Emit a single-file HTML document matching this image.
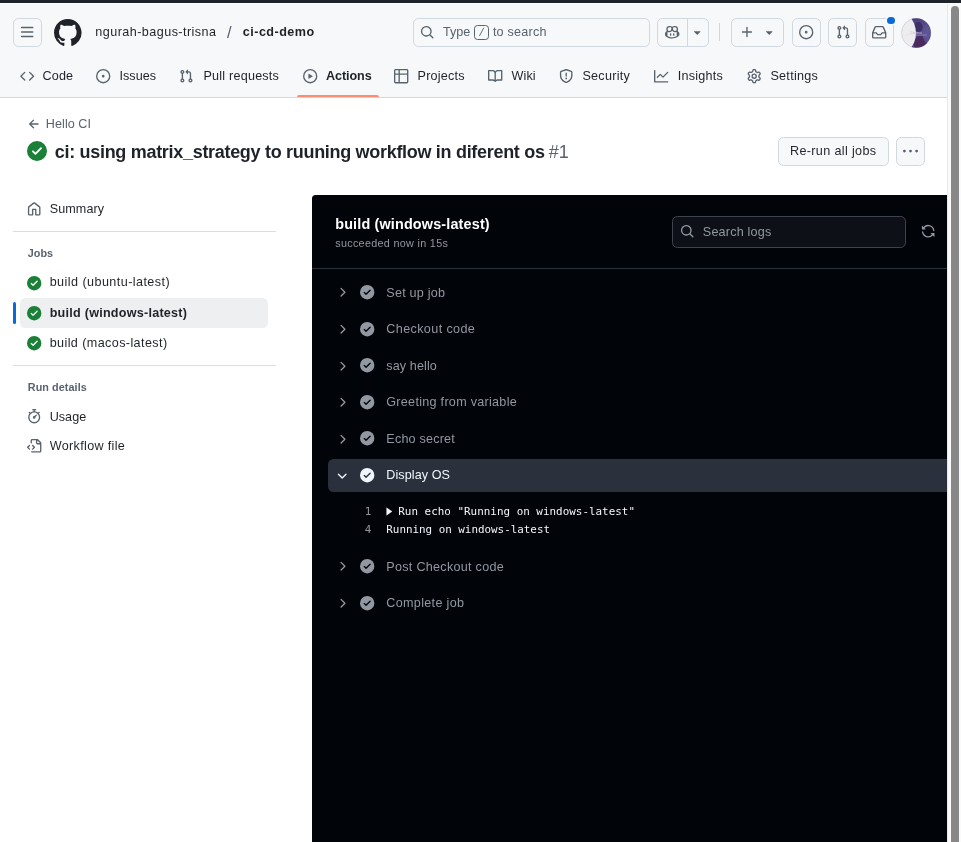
<!DOCTYPE html>
<html lang="en">
<head>
<meta charset="utf-8">
<title>ci: using matrix_strategy to ruuning workflow in diferent os · ngurah-bagus-trisna/ci-cd-demo</title>
<style>
html,body{margin:0;padding:0;}
body{width:961px;height:842px;position:relative;overflow:hidden;background:#fff;font-family:"Liberation Sans",sans-serif;}
body>div,body>svg,.t{position:absolute;box-sizing:border-box;}
main{position:absolute;left:0;top:0;width:961px;height:842px;will-change:transform;}
.t{white-space:pre;margin:0;font-weight:400;}
svg{display:block;overflow:visible;}
</style>
</head>
<body>
<div style="left:0px;top:0px;width:947px;height:98px;background:#f6f8fa;border-bottom:1px solid #d1d9e0;"></div>
<div style="left:0px;top:0px;width:961px;height:3px;background:#1e222a;"></div>
<div style="left:0px;top:3px;width:961px;height:1px;background:#ffffff;"></div>
<div style="left:947px;top:4px;width:14px;height:838px;background:#fafafa;border-left:1px solid #e8e8e8;"></div>
<div style="left:951px;top:6px;width:8px;height:836px;background:#888888;border-radius:4px 4px 0 0;"></div>
<div style="left:13px;top:18px;width:28.8px;height:28.8px;border:1px solid #d1d9e0;border-radius:5.4px;"></div>
<svg style="left:20.20px;top:25.20px;" width="14.4" height="14.4" viewBox="0 0 16 16" fill="#59636e"><path d="M1 2.75A.75.75 0 0 1 1.75 2h12.5a.75.75 0 0 1 0 1.5H1.75A.75.75 0 0 1 1 2.75Zm0 5A.75.75 0 0 1 1.75 7h12.5a.75.75 0 0 1 0 1.5H1.75A.75.75 0 0 1 1 7.75ZM1.75 12h12.5a.75.75 0 0 1 0 1.5H1.75a.75.75 0 0 1 0-1.5Z"/></svg>
<svg style="left:54.00px;top:18.70px;" width="27.6" height="27.6" viewBox="0 0 16 16" fill="#1f2328"><path d="M8 0c4.42 0 8 3.58 8 8a8.013 8.013 0 0 1-5.45 7.59c-.4.08-.55-.17-.55-.38 0-.27.01-1.13.01-2.2 0-.75-.25-1.23-.54-1.48 1.78-.2 3.65-.88 3.65-3.95 0-.88-.31-1.59-.82-2.15.08-.2.36-1.02-.08-2.12 0 0-.67-.22-2.2.82-.64-.18-1.32-.27-2-.27-.68 0-1.36.09-2 .27-1.53-1.03-2.2-.82-2.2-.82-.44 1.1-.16 1.92-.08 2.12-.51.56-.82 1.28-.82 2.15 0 3.06 1.86 3.75 3.64 3.95-.23.2-.44.55-.51 1.07-.46.21-1.61.55-2.33-.66-.15-.24-.6-.83-1.23-.82-.67.01-.27.38.01.53.34.19.73.9.82 1.13.16.45.68 1.31 2.69.94 0 .67.01 1.3.01 1.49 0 .21-.15.45-.55.38A7.995 7.995 0 0 1 0 8c0-4.42 3.58-8 8-8Z"/></svg>
<div style="left:413px;top:18px;width:237px;height:28.8px;border:1px solid #d1d9e0;border-radius:5.4px;"></div>
<svg style="left:420.30px;top:25.10px;" width="14.4" height="14.4" viewBox="0 0 16 16" fill="#59636e"><path d="M10.68 11.74a6 6 0 0 1-7.922-8.982 6 6 0 0 1 8.982 7.922l3.04 3.04a.749.749 0 0 1-.326 1.275.749.749 0 0 1-.734-.215ZM11.5 7a4.499 4.499 0 1 0-8.997 0A4.499 4.499 0 0 0 11.5 7Z"/></svg>
<div style="left:474px;top:25.4px;width:15px;height:14.4px;border:1px solid #59636e;border-radius:3.5px;"></div>
<div style="left:657px;top:18px;width:52px;height:28.8px;border:1px solid #d1d9e0;border-radius:5.4px;"></div>
<div style="left:687px;top:18px;width:1px;height:28.8px;background:#d1d9e0;"></div>
<svg style="left:665.00px;top:25.30px;" width="14.4" height="14.4" viewBox="0 0 16 16" fill="#59636e"><path d="M7.998 15.035c-4.562 0-7.873-2.914-7.998-3.749V9.338c.085-.628.677-1.686 1.588-2.065.013-.07.024-.143.036-.218.029-.183.06-.384.126-.612-.201-.508-.254-1.084-.254-1.656 0-.87.128-1.769.693-2.484.579-.733 1.494-1.124 2.724-1.261 1.206-.134 2.262.034 2.944.765.05.053.096.108.139.165.044-.057.094-.112.143-.165.682-.731 1.738-.899 2.944-.765 1.23.137 2.145.528 2.724 1.261.566.715.693 1.614.693 2.484 0 .572-.053 1.148-.254 1.656.066.228.098.429.126.612.012.076.024.148.037.218.924.385 1.522 1.471 1.591 2.095v1.872c0 .766-3.351 3.795-8.002 3.795Zm0-1.485c2.28 0 4.584-1.11 5.002-1.433V7.862l-.023-.116c-.49.21-1.075.291-1.727.291-1.146 0-2.059-.327-2.71-.991A3.222 3.222 0 0 1 8 6.303a3.24 3.24 0 0 1-.544.743c-.65.664-1.563.991-2.71.991-.652 0-1.236-.081-1.727-.291l-.23.116v4.255c.419.323 2.722 1.433 5.002 1.433ZM6.762 2.83c-.193-.206-.637-.413-1.682-.297-1.019.113-1.479.404-1.713.7-.247.312-.369.789-.369 1.554 0 .793.129 1.171.308 1.371.162.181.519.379 1.442.379.853 0 1.339-.235 1.638-.54.315-.322.527-.827.617-1.553.117-.935-.037-1.395-.241-1.614Zm4.155-.297c-1.044-.116-1.488.091-1.681.297-.204.219-.359.679-.242 1.614.091.726.303 1.231.618 1.553.299.305.784.54 1.638.54.922 0 1.28-.198 1.442-.379.179-.2.308-.578.308-1.371 0-.765-.123-1.242-.37-1.554-.233-.296-.693-.587-1.713-.7ZM6.25 9.037a.75.75 0 0 1 .75.75v1.501a.75.75 0 0 1-1.5 0V9.787a.75.75 0 0 1 .75-.75Zm4.25.75v1.501a.75.75 0 0 1-1.5 0V9.787a.75.75 0 0 1 1.5 0Z"/></svg>
<svg style="left:690.10px;top:25.40px;" width="14.4" height="14.4" viewBox="0 0 16 16" fill="#59636e"><path d="m4.427 7.427 3.396 3.396a.25.25 0 0 0 .354 0l3.396-3.396A.25.25 0 0 0 11.396 7H4.604a.25.25 0 0 0-.177.427Z"/></svg>
<div style="left:719px;top:23px;width:1px;height:18px;background:#d1d9e0;"></div>
<div style="left:731px;top:18px;width:52.6px;height:28.8px;border:1px solid #d1d9e0;border-radius:5.4px;"></div>
<svg style="left:740.00px;top:25.00px;" width="14.4" height="14.4" viewBox="0 0 16 16" fill="#59636e"><path d="M7.75 2a.75.75 0 0 1 .75.75V7h4.25a.75.75 0 0 1 0 1.5H8.5v4.25a.75.75 0 0 1-1.5 0V8.500H2.75a.75.75 0 0 1 0-1.5H7V2.750A.75.75 0 0 1 7.750 2Z"/></svg>
<svg style="left:762.00px;top:25.20px;" width="14.4" height="14.4" viewBox="0 0 16 16" fill="#59636e"><path d="m4.427 7.427 3.396 3.396a.25.25 0 0 0 .354 0l3.396-3.396A.25.25 0 0 0 11.396 7H4.604a.25.25 0 0 0-.177.427Z"/></svg>
<div style="left:792px;top:18px;width:28.8px;height:28.8px;border:1px solid #d1d9e0;border-radius:5.4px;"></div>
<svg style="left:799.00px;top:25.20px;" width="14.4" height="14.4" viewBox="0 0 16 16" fill="#59636e"><path d="M8 9.5a1.5 1.5 0 1 0 0-3 1.5 1.5 0 0 0 0 3ZM8 0a8 8 0 1 1 0 16A8 8 0 0 1 8 0ZM1.5 8a6.5 6.5 0 1 0 13 0 6.5 6.5 0 0 0-13 0Z"/></svg>
<div style="left:828px;top:18px;width:28.8px;height:28.8px;border:1px solid #d1d9e0;border-radius:5.4px;"></div>
<svg style="left:835.90px;top:25.30px;" width="14.4" height="14.4" viewBox="0 0 16 16" fill="#59636e"><path d="M1.5 3.25a2.25 2.25 0 1 1 3 2.122v5.256a2.251 2.251 0 1 1-1.5 0V5.372A2.25 2.25 0 0 1 1.5 3.25Zm5.677-.177L9.573.677A.25.25 0 0 1 10 .854V2.5h1A2.5 2.5 0 0 1 13.5 5v5.628a2.251 2.251 0 1 1-1.5 0V5a1 1 0 0 0-1-1h-1v1.646a.25.25 0 0 1-.427.177L7.177 3.427a.25.25 0 0 1 0-.354ZM3.75 2.5a.75.75 0 1 0 0 1.5.75.75 0 0 0 0-1.5Zm0 9.5a.75.75 0 1 0 0 1.5.75.75 0 0 0 0-1.5Zm8.25.75a.75.75 0 1 0 1.5 0 .75.75 0 0 0-1.5 0Z"/></svg>
<div style="left:865px;top:18px;width:28.8px;height:28.8px;border:1px solid #d1d9e0;border-radius:5.4px;"></div>
<svg style="left:872.20px;top:25.10px;" width="14.4" height="14.4" viewBox="0 0 16 16" fill="#59636e"><path d="M2.8 2.06A1.75 1.75 0 0 1 4.41 1h7.18c.7 0 1.333.417 1.61 1.06l2.74 6.395c.04.093.06.194.06.295v4.5A1.75 1.75 0 0 1 14.250 15H1.75A1.75 1.75 0 0 1 0 13.250v-4.5c0-.101.02-.202.06-.295Zm1.61.44a.25.25 0 0 0-.23.152L1.887 8H4.750a.75.75 0 0 1 .6.3L6.625 10h2.750l1.275-1.7a.75.75 0 0 1 .6-.3h2.863L11.820 2.652a.25.25 0 0 0-.23-.152Zm10.090 7h-2.875l-1.275 1.7a.75.75 0 0 1-.6.3h-3.5a.75.75 0 0 1-.6-.3L4.375 9.5H1.5v3.750c0 .138.112.25.25.25h12.5a.25.25 0 0 0 .25-.25Z"/></svg>
<div style="left:887.2px;top:16.6px;width:7.6px;height:7.6px;background:#0969da;border-radius:50%;box-shadow:0 0 0 1.5px #f6f8fa;"></div>
<svg style="left:901px;top:17.6px" width="30.4" height="30.4" viewBox="0 0 30.4 30.4">
<defs><mask id="avm"><circle cx="15.2" cy="15" r="14.7" fill="#fff"/><circle cx="-10.1" cy="15" r="25.1" fill="#000"/></mask>
<linearGradient id="avg" x1="0" y1="0" x2="1" y2="1"><stop offset="0" stop-color="#3f3370"/><stop offset=".55" stop-color="#5a4f8e"/><stop offset="1" stop-color="#4a3a78"/></linearGradient></defs>
<circle cx="15.2" cy="15" r="14.7" fill="#ededef"/>
<g mask="url(#avm)"><rect width="31" height="31" fill="url(#avg)"/>
<ellipse cx="17.5" cy="9" rx="4.2" ry="5" fill="#3d2f6a"/><ellipse cx="19" cy="25.5" rx="6.5" ry="7.5" fill="#4b2a60"/><ellipse cx="26" cy="17" rx="4" ry="8" fill="#62589a" opacity=".7"/></g>
<circle cx="15.2" cy="15" r="14.7" fill="none" stroke="#1f2328" stroke-opacity=".16" stroke-width=".8"/>
<path d="M4.7 17h21.2" stroke="#d6d2e6" stroke-width=".35" fill="none"/>
<text x="9.2" y="15.8" font-family="Liberation Sans, sans-serif" font-size="4.4" fill="#c3bddc">Demo</text></svg>
<svg style="left:20.00px;top:69.00px;" width="14.4" height="14.4" viewBox="0 0 16 16" fill="#59636e"><path d="m11.28 3.22 4.25 4.25a.75.75 0 0 1 0 1.06l-4.25 4.25a.749.749 0 0 1-1.275-.326.749.749 0 0 1 .215-.734L13.94 8l-3.72-3.72a.749.749 0 0 1 .326-1.275.749.749 0 0 1 .734.215Zm-6.56 0a.751.751 0 0 1 1.042.018.751.751 0 0 1 .018 1.042L2.06 8l3.72 3.72a.749.749 0 0 1-.326 1.275.749.749 0 0 1-.734-.215L.47 8.53a.75.75 0 0 1 0-1.06Z"/></svg>
<svg style="left:96.10px;top:69.00px;" width="14.4" height="14.4" viewBox="0 0 16 16" fill="#59636e"><path d="M8 9.5a1.5 1.5 0 1 0 0-3 1.5 1.5 0 0 0 0 3ZM8 0a8 8 0 1 1 0 16A8 8 0 0 1 8 0ZM1.5 8a6.5 6.5 0 1 0 13 0 6.5 6.5 0 0 0-13 0Z"/></svg>
<svg style="left:179.00px;top:69.00px;" width="14.4" height="14.4" viewBox="0 0 16 16" fill="#59636e"><path d="M1.5 3.25a2.25 2.25 0 1 1 3 2.122v5.256a2.251 2.251 0 1 1-1.5 0V5.372A2.25 2.25 0 0 1 1.5 3.25Zm5.677-.177L9.573.677A.25.25 0 0 1 10 .854V2.5h1A2.5 2.5 0 0 1 13.5 5v5.628a2.251 2.251 0 1 1-1.5 0V5a1 1 0 0 0-1-1h-1v1.646a.25.25 0 0 1-.427.177L7.177 3.427a.25.25 0 0 1 0-.354ZM3.75 2.5a.75.75 0 1 0 0 1.5.75.75 0 0 0 0-1.5Zm0 9.5a.75.75 0 1 0 0 1.5.75.75 0 0 0 0-1.5Zm8.25.75a.75.75 0 1 0 1.5 0 .75.75 0 0 0-1.5 0Z"/></svg>
<svg style="left:303.00px;top:69.00px;" width="14.4" height="14.4" viewBox="0 0 16 16" fill="#59636e"><path d="M8 0a8 8 0 1 1 0 16A8 8 0 0 1 8 0ZM1.5 8a6.5 6.5 0 1 0 13 0 6.5 6.5 0 0 0-13 0Zm4.879-2.773 4.264 2.559a.25.25 0 0 1 0 .428l-4.264 2.559A.25.25 0 0 1 6 10.559V5.442a.25.25 0 0 1 .379-.215Z"/></svg>
<svg style="left:394.20px;top:69.00px;" width="14.4" height="14.4" viewBox="0 0 16 16" fill="#59636e"><path d="M0 1.75C0 .784.784 0 1.75 0h12.5C15.216 0 16 .784 16 1.75v12.5A1.75 1.75 0 0 1 14.25 16H1.75A1.75 1.75 0 0 1 0 14.25ZM6.5 6.5v8h7.75a.25.25 0 0 0 .25-.25V6.5Zm8-1.5V1.75a.25.25 0 0 0-.25-.25H6.5V5Zm-13 1.5v7.75c0 .138.112.25.25.25H5v-8ZM5 5V1.5H1.75a.25.25 0 0 0-.25.25V5Z"/></svg>
<svg style="left:488.10px;top:69.00px;" width="14.4" height="14.4" viewBox="0 0 16 16" fill="#59636e"><path d="M0 1.75A.75.75 0 0 1 .75 1h4.253c1.227 0 2.317.59 3 1.501A3.743 3.743 0 0 1 11.006 1h4.245a.75.75 0 0 1 .75.75v10.5a.75.75 0 0 1-.75.75h-4.507a2.25 2.25 0 0 0-1.591.659l-.622.621a.75.75 0 0 1-1.06 0l-.622-.621A2.25 2.25 0 0 0 5.258 13H.75a.75.75 0 0 1-.75-.75Zm7.251 10.324.004-5.073-.002-2.253A2.25 2.25 0 0 0 5.003 2.5H1.5v9h3.757a3.75 3.75 0 0 1 1.994.574ZM8.755 4.75l-.004 7.322a3.752 3.752 0 0 1 1.992-.572H14.5v-9h-3.495a2.25 2.25 0 0 0-2.25 2.25Z"/></svg>
<svg style="left:559.30px;top:69.00px;" width="14.4" height="14.4" viewBox="0 0 16 16" fill="#59636e"><path d="M7.467.133a1.748 1.748 0 0 1 1.066 0l5.25 1.68A1.75 1.75 0 0 1 15 3.48V7c0 1.566-.32 3.182-1.303 4.682-.983 1.498-2.585 2.813-5.032 3.855a1.697 1.697 0 0 1-1.33 0c-2.447-1.042-4.049-2.357-5.032-3.855C1.32 10.182 1 8.566 1 7V3.48a1.75 1.75 0 0 1 1.217-1.667Zm.61 1.429a.25.25 0 0 0-.153 0l-5.25 1.68a.25.25 0 0 0-.174.238V7c0 1.358.275 2.666 1.057 3.86.784 1.194 2.121 2.34 4.366 3.297a.196.196 0 0 0 .154 0c2.245-.956 3.582-2.104 4.366-3.298C13.225 9.666 13.5 8.36 13.5 7V3.48a.251.251 0 0 0-.174-.237l-5.25-1.68ZM8.75 4.75v3a.75.75 0 0 1-1.5 0v-3a.75.75 0 0 1 1.5 0ZM9 10.5a1 1 0 1 1-2 0 1 1 0 0 1 2 0Z"/></svg>
<svg style="left:654.10px;top:69.00px;" width="14.4" height="14.4" viewBox="0 0 16 16" fill="#59636e"><path d="M1.5 1.75V13.5h13.75a.75.75 0 0 1 0 1.5H.75a.75.75 0 0 1-.75-.75V1.75a.75.75 0 0 1 1.5 0Zm14.28 2.53-5.25 5.25a.75.75 0 0 1-1.06 0L7 7.06 4.28 9.78a.751.751 0 0 1-1.042-.018.751.751 0 0 1-.018-1.042l3.25-3.25a.75.75 0 0 1 1.06 0L10 7.94l4.72-4.72a.751.751 0 0 1 1.042.018.751.751 0 0 1 .018 1.042Z"/></svg>
<svg style="left:747.00px;top:69.00px;" width="14.4" height="14.4" viewBox="0 0 16 16" fill="#59636e"><path d="M8 0a8.2 8.2 0 0 1 .701.031C9.444.095 9.99.645 10.16 1.29l.288 1.107c.018.066.079.158.212.224.231.114.454.243.668.386.123.082.233.09.299.071l1.103-.303c.644-.176 1.392.021 1.82.63.27.385.506.792.704 1.218.315.675.111 1.422-.364 1.891l-.814.806c-.049.048-.098.147-.088.294.016.257.016.515 0 .772-.01.147.038.246.088.294l.814.806c.475.469.679 1.216.364 1.891a7.977 7.977 0 0 1-.704 1.217c-.428.61-1.176.807-1.82.63l-1.102-.302c-.067-.019-.177-.011-.3.071a5.909 5.909 0 0 1-.668.386c-.133.066-.194.158-.211.224l-.29 1.106c-.168.646-.715 1.196-1.458 1.26a8.006 8.006 0 0 1-1.402 0c-.743-.064-1.289-.614-1.458-1.26l-.289-1.106c-.018-.066-.079-.158-.212-.224a5.738 5.738 0 0 1-.668-.386c-.123-.082-.233-.09-.299-.071l-1.103.303c-.644.176-1.392-.021-1.82-.63a8.12 8.12 0 0 1-.704-1.218c-.315-.675-.111-1.422.363-1.891l.815-.806c.05-.048.098-.147.088-.294a6.214 6.214 0 0 1 0-.772c.01-.147-.038-.246-.088-.294l-.815-.806C.635 6.045.431 5.298.746 4.623a7.92 7.92 0 0 1 .704-1.217c.428-.61 1.176-.807 1.82-.63l1.102.302c.067.019.177.011.3-.071.214-.143.437-.272.668-.386.133-.066.194-.158.211-.224l.29-1.106C6.009.645 6.556.095 7.299.03 7.53.01 7.764 0 8 0Zm-.571 1.525c-.036.003-.108.036-.137.146l-.289 1.105c-.147.561-.549.967-.998 1.189-.173.086-.34.183-.5.29-.417.278-.97.423-1.529.27l-1.103-.303c-.109-.03-.175.016-.195.045-.22.312-.412.644-.573.99-.014.031-.021.11.059.19l.815.806c.411.406.562.957.53 1.456a4.709 4.709 0 0 0 0 .582c.032.499-.119 1.05-.53 1.456l-.815.806c-.081.08-.073.159-.059.19.162.346.353.677.573.989.02.03.085.076.195.046l1.102-.303c.56-.153 1.113-.008 1.53.27.161.107.328.204.501.29.447.222.85.629.997 1.189l.289 1.105c.029.109.101.143.137.146a6.6 6.6 0 0 0 1.142 0c.036-.003.108-.036.137-.146l.289-1.105c.147-.561.549-.967.998-1.189.173-.086.34-.183.5-.29.417-.278.97-.423 1.529-.27l1.103.303c.109.029.175-.016.195-.045.22-.313.411-.644.573-.99.014-.031.021-.11-.059-.19l-.815-.806c-.411-.406-.562-.957-.53-1.456a4.709 4.709 0 0 0 0-.582c-.032-.499.119-1.05.53-1.456l.815-.806c.081-.08.073-.159.059-.19a6.464 6.464 0 0 0-.573-.989c-.02-.03-.085-.076-.195-.046l-1.102.303c-.56.153-1.113.008-1.53-.27a4.44 4.44 0 0 0-.501-.29c-.447-.222-.85-.629-.997-1.189l-.289-1.105c-.029-.11-.101-.143-.137-.146a6.6 6.6 0 0 0-1.142 0ZM11 8a3 3 0 1 1-6 0 3 3 0 0 1 6 0ZM9.5 8a1.5 1.5 0 1 0-3.001.001A1.5 1.5 0 0 0 9.5 8Z"/></svg>
<div style="left:296.6px;top:95px;width:82.8px;height:2px;background:#fd8c73;border-radius:2px 2px 0 0;"></div>
<svg style="left:27.00px;top:117.00px;" width="14.4" height="14.4" viewBox="0 0 16 16" fill="#59636e"><path d="M7.78 12.53a.75.75 0 0 1-1.06 0L2.47 8.28a.75.75 0 0 1 0-1.06l4.25-4.25a.751.751 0 0 1 1.042.018.751.751 0 0 1 .018 1.042L4.81 7h7.44a.75.75 0 0 1 0 1.5H4.81l2.97 2.97a.75.75 0 0 1 0 1.06Z"/></svg>
<svg style="left:27.10px;top:140.80px;" width="20" height="20" viewBox="0 0 16 16" fill="#1a7f37"><path d="M8 16A8 8 0 1 1 8 0a8 8 0 0 1 0 16Zm3.78-9.72a.751.751 0 0 0-.018-1.042.751.751 0 0 0-1.042-.018L6.75 9.19 5.28 7.72a.751.751 0 0 0-1.042.018.751.751 0 0 0-.018 1.042l2 2a.75.75 0 0 0 1.06 0Z"/></svg>
<div style="left:778px;top:137px;width:111px;height:28.6px;background:#f6f8fa;border:1px solid #d1d9e0;border-radius:5.4px;"></div>
<div style="left:896px;top:137px;width:28.6px;height:28.6px;background:#f6f8fa;border:1px solid #d1d9e0;border-radius:5.4px;"></div>
<svg style="left:902.80px;top:143.60px;" width="15" height="15" viewBox="0 0 16 16" fill="#59636e"><path d="M8 9a1.5 1.5 0 1 0 0-3 1.5 1.5 0 0 0 0 3ZM1.5 9a1.5 1.5 0 1 0 0-3 1.5 1.5 0 0 0 0 3Zm13 0a1.5 1.5 0 1 0 0-3 1.5 1.5 0 0 0 0 3Z"/></svg>
<svg style="left:27.30px;top:201.70px;" width="14.4" height="14.4" viewBox="0 0 16 16" fill="#59636e"><path d="M6.906.664a1.749 1.749 0 0 1 2.187 0l5.25 4.2c.415.332.657.835.657 1.367v7.019A1.75 1.75 0 0 1 13.25 15h-3.5a.75.75 0 0 1-.75-.75V9H7v5.25a.75.75 0 0 1-.75.75h-3.5A1.75 1.75 0 0 1 1 13.25V6.23c0-.531.242-1.034.657-1.366l5.25-4.2Zm1.25 1.171a.25.25 0 0 0-.312 0l-5.25 4.2a.25.25 0 0 0-.094.196v7.019c0 .138.112.25.25.25H5.5V8.25a.75.75 0 0 1 .75-.75h3.5a.75.75 0 0 1 .75.75v5.25h2.75a.25.25 0 0 0 .25-.25V6.23a.25.25 0 0 0-.094-.195Z"/></svg>
<div style="left:13px;top:231px;width:263px;height:1px;background:#d8dee4;"></div>
<svg style="left:27.30px;top:275.80px;" width="14.4" height="14.4" viewBox="0 0 16 16" fill="#1a7f37"><path d="M8 16A8 8 0 1 1 8 0a8 8 0 0 1 0 16Zm3.78-9.72a.751.751 0 0 0-.018-1.042.751.751 0 0 0-1.042-.018L6.75 9.19 5.28 7.72a.751.751 0 0 0-1.042.018.751.751 0 0 0-.018 1.042l2 2a.75.75 0 0 0 1.06 0Z"/></svg>
<div style="left:20px;top:298px;width:248px;height:30px;background:#edeff1;border-radius:5.4px;"></div>
<div style="left:13px;top:302px;width:3.2px;height:21.7px;background:#0969da;border-radius:3px;"></div>
<svg style="left:27.30px;top:305.80px;" width="14.4" height="14.4" viewBox="0 0 16 16" fill="#1a7f37"><path d="M8 16A8 8 0 1 1 8 0a8 8 0 0 1 0 16Zm3.78-9.72a.751.751 0 0 0-.018-1.042.751.751 0 0 0-1.042-.018L6.75 9.19 5.28 7.72a.751.751 0 0 0-1.042.018.751.751 0 0 0-.018 1.042l2 2a.75.75 0 0 0 1.06 0Z"/></svg>
<svg style="left:27.30px;top:335.90px;" width="14.4" height="14.4" viewBox="0 0 16 16" fill="#1a7f37"><path d="M8 16A8 8 0 1 1 8 0a8 8 0 0 1 0 16Zm3.78-9.72a.751.751 0 0 0-.018-1.042.751.751 0 0 0-1.042-.018L6.75 9.19 5.28 7.72a.751.751 0 0 0-1.042.018.751.751 0 0 0-.018 1.042l2 2a.75.75 0 0 0 1.06 0Z"/></svg>
<div style="left:13px;top:365px;width:263px;height:1px;background:#d8dee4;"></div>
<svg style="left:27.20px;top:408.90px;" width="14.4" height="14.4" viewBox="0 0 16 16" fill="#59636e"><path d="M5.75.75A.75.75 0 0 1 6.5 0h3a.75.75 0 0 1 0 1.5h-.75v1l-.001.041a6.724 6.724 0 0 1 3.464 1.435l.007-.006.75-.75a.749.749 0 0 1 1.275.326.749.749 0 0 1-.215.734l-.75.75-.006.007a6.75 6.75 0 1 1-10.548 0L2.72 5.03l-.75-.75a.751.751 0 0 1 .018-1.042.751.751 0 0 1 1.042-.018l.75.75.007.006A6.72 6.72 0 0 1 7.25 2.541V1.5H6.5a.75.75 0 0 1-.75-.75ZM8 14.5a5.25 5.25 0 1 0-.001-10.501A5.25 5.25 0 0 0 8 14.5Zm.389-6.7 1.33-1.33a.75.75 0 1 1 1.061 1.06L9.45 8.861A1.503 1.503 0 0 1 8 10.75a1.499 1.499 0 1 1 .389-2.95Z"/></svg>
<svg style="left:27.30px;top:438.80px;" width="14.4" height="14.4" viewBox="0 0 16 16" fill="#59636e"><path d="M4 1.75C4 .784 4.784 0 5.75 0h5.586c.464 0 .909.184 1.237.513l2.914 2.914c.329.328.513.773.513 1.237v8.586A1.75 1.75 0 0 1 14.25 15h-9a.75.75 0 0 1 0-1.5h9a.25.25 0 0 0 .25-.25V6h-2.75A1.75 1.75 0 0 1 10 4.25V1.5H5.75a.25.25 0 0 0-.25.25v2.5a.75.75 0 0 1-1.5 0Zm1.72 4.97a.75.75 0 0 1 1.06 0l2 2a.75.75 0 0 1 0 1.06l-2 2a.749.749 0 0 1-1.275-.326.749.749 0 0 1 .215-.734l1.47-1.47-1.47-1.47a.75.75 0 0 1 0-1.06ZM3.28 7.78 1.81 9.25l1.47 1.47a.751.751 0 0 1-.018 1.042.751.751 0 0 1-1.042.018l-2-2a.75.75 0 0 1 0-1.06l2-2a.751.751 0 0 1 1.042.018.751.751 0 0 1 .018 1.042Zm8.22-6.218V4.25c0 .138.112.25.25.25h2.688l-.011-.013-2.914-2.914-.013-.011Z"/></svg>
<div style="left:312px;top:195px;width:635px;height:647px;background:#010409;border-radius:3.5px 0 0 0;"></div>
<div style="left:672px;top:216px;width:234px;height:32px;background:#0d1117;border:1px solid #3d444d;border-radius:5.4px;"></div>
<svg style="left:680.10px;top:224.30px;" width="14.4" height="14.4" viewBox="0 0 16 16" fill="#9198a1"><path d="M10.68 11.74a6 6 0 0 1-7.922-8.982 6 6 0 0 1 8.982 7.922l3.04 3.04a.749.749 0 0 1-.326 1.275.749.749 0 0 1-.734-.215ZM11.5 7a4.499 4.499 0 1 0-8.997 0A4.499 4.499 0 0 0 11.5 7Z"/></svg>
<svg style="left:921.30px;top:224.30px;" width="14.4" height="14.4" viewBox="0 0 16 16" fill="#9198a1"><path d="M1.705 8.005a.75.75 0 0 1 .834.656 5.5 5.5 0 0 0 9.592 2.97l-1.204-1.204a.25.25 0 0 1 .177-.427h3.646a.25.25 0 0 1 .25.25v3.646a.25.25 0 0 1-.427.177l-1.38-1.38A7.002 7.002 0 0 1 1.05 8.84a.75.75 0 0 1 .656-.834ZM8 2.5a5.487 5.487 0 0 0-4.131 1.869l1.204 1.204A.25.25 0 0 1 4.896 6H1.25A.25.25 0 0 1 1 5.75V2.104a.25.25 0 0 1 .427-.177l1.38 1.38A7.002 7.002 0 0 1 14.95 7.16a.75.75 0 0 1-1.49.178A5.5 5.5 0 0 0 8 2.5Z"/></svg>
<div style="left:312px;top:268px;width:635px;height:1px;background:#2b313a;"></div>
<svg style="left:334.70px;top:285.30px;" width="14.4" height="14.4" viewBox="0 0 16 16" fill="#9198a1"><path d="M6.22 3.22a.75.75 0 0 1 1.06 0l4.25 4.25a.75.75 0 0 1 0 1.06l-4.25 4.25a.751.751 0 0 1-1.042-.018.751.751 0 0 1-.018-1.042L9.94 8 6.22 4.28a.75.75 0 0 1 0-1.06Z"/></svg>
<svg style="left:360.10px;top:285.10px;" width="14.4" height="14.4" viewBox="0 0 16 16" fill="#9198a1"><path d="M8 16A8 8 0 1 1 8 0a8 8 0 0 1 0 16Zm3.78-9.72a.751.751 0 0 0-.018-1.042.751.751 0 0 0-1.042-.018L6.75 9.19 5.28 7.72a.751.751 0 0 0-1.042.018.751.751 0 0 0-.018 1.042l2 2a.75.75 0 0 0 1.06 0Z"/></svg>
<svg style="left:334.70px;top:322.00px;" width="14.4" height="14.4" viewBox="0 0 16 16" fill="#9198a1"><path d="M6.22 3.22a.75.75 0 0 1 1.06 0l4.25 4.25a.75.75 0 0 1 0 1.06l-4.25 4.25a.751.751 0 0 1-1.042-.018.751.751 0 0 1-.018-1.042L9.94 8 6.22 4.28a.75.75 0 0 1 0-1.06Z"/></svg>
<svg style="left:360.10px;top:321.80px;" width="14.4" height="14.4" viewBox="0 0 16 16" fill="#9198a1"><path d="M8 16A8 8 0 1 1 8 0a8 8 0 0 1 0 16Zm3.78-9.72a.751.751 0 0 0-.018-1.042.751.751 0 0 0-1.042-.018L6.75 9.19 5.28 7.72a.751.751 0 0 0-1.042.018.751.751 0 0 0-.018 1.042l2 2a.75.75 0 0 0 1.06 0Z"/></svg>
<svg style="left:334.70px;top:358.60px;" width="14.4" height="14.4" viewBox="0 0 16 16" fill="#9198a1"><path d="M6.22 3.22a.75.75 0 0 1 1.06 0l4.25 4.25a.75.75 0 0 1 0 1.06l-4.25 4.25a.751.751 0 0 1-1.042-.018.751.751 0 0 1-.018-1.042L9.94 8 6.22 4.28a.75.75 0 0 1 0-1.06Z"/></svg>
<svg style="left:360.10px;top:358.40px;" width="14.4" height="14.4" viewBox="0 0 16 16" fill="#9198a1"><path d="M8 16A8 8 0 1 1 8 0a8 8 0 0 1 0 16Zm3.78-9.72a.751.751 0 0 0-.018-1.042.751.751 0 0 0-1.042-.018L6.75 9.19 5.28 7.72a.751.751 0 0 0-1.042.018.751.751 0 0 0-.018 1.042l2 2a.75.75 0 0 0 1.06 0Z"/></svg>
<svg style="left:334.70px;top:395.20px;" width="14.4" height="14.4" viewBox="0 0 16 16" fill="#9198a1"><path d="M6.22 3.22a.75.75 0 0 1 1.06 0l4.25 4.25a.75.75 0 0 1 0 1.06l-4.25 4.25a.751.751 0 0 1-1.042-.018.751.751 0 0 1-.018-1.042L9.94 8 6.22 4.28a.75.75 0 0 1 0-1.06Z"/></svg>
<svg style="left:360.10px;top:395.00px;" width="14.4" height="14.4" viewBox="0 0 16 16" fill="#9198a1"><path d="M8 16A8 8 0 1 1 8 0a8 8 0 0 1 0 16Zm3.78-9.72a.751.751 0 0 0-.018-1.042.751.751 0 0 0-1.042-.018L6.75 9.19 5.28 7.72a.751.751 0 0 0-1.042.018.751.751 0 0 0-.018 1.042l2 2a.75.75 0 0 0 1.06 0Z"/></svg>
<svg style="left:334.70px;top:431.60px;" width="14.4" height="14.4" viewBox="0 0 16 16" fill="#9198a1"><path d="M6.22 3.22a.75.75 0 0 1 1.06 0l4.25 4.25a.75.75 0 0 1 0 1.06l-4.25 4.25a.751.751 0 0 1-1.042-.018.751.751 0 0 1-.018-1.042L9.94 8 6.22 4.28a.75.75 0 0 1 0-1.06Z"/></svg>
<svg style="left:360.10px;top:431.40px;" width="14.4" height="14.4" viewBox="0 0 16 16" fill="#9198a1"><path d="M8 16A8 8 0 1 1 8 0a8 8 0 0 1 0 16Zm3.78-9.72a.751.751 0 0 0-.018-1.042.751.751 0 0 0-1.042-.018L6.75 9.19 5.28 7.72a.751.751 0 0 0-1.042.018.751.751 0 0 0-.018 1.042l2 2a.75.75 0 0 0 1.06 0Z"/></svg>
<div style="left:328px;top:459px;width:619px;height:33px;background:#2a313c;border-radius:5.4px 0 0 5.4px;"></div>
<svg style="left:335.40px;top:468.60px;" width="14.4" height="14.4" viewBox="0 0 16 16" fill="#f0f6fc"><path d="M12.78 5.22a.749.749 0 0 1 0 1.06l-4.25 4.25a.749.749 0 0 1-1.06 0L3.22 6.28a.749.749 0 1 1 1.06-1.06L8 8.939l3.72-3.719a.749.749 0 0 1 1.06 0Z"/></svg>
<svg style="left:360.10px;top:468.20px;" width="14.4" height="14.4" viewBox="0 0 16 16" fill="#f0f6fc"><path d="M8 16A8 8 0 1 1 8 0a8 8 0 0 1 0 16Zm3.78-9.72a.751.751 0 0 0-.018-1.042.751.751 0 0 0-1.042-.018L6.75 9.19 5.28 7.72a.751.751 0 0 0-1.042.018.751.751 0 0 0-.018 1.042l2 2a.75.75 0 0 0 1.06 0Z"/></svg>
<svg style="left:334.70px;top:559.40px;" width="14.4" height="14.4" viewBox="0 0 16 16" fill="#9198a1"><path d="M6.22 3.22a.75.75 0 0 1 1.06 0l4.25 4.25a.75.75 0 0 1 0 1.06l-4.25 4.25a.751.751 0 0 1-1.042-.018.751.751 0 0 1-.018-1.042L9.94 8 6.22 4.28a.75.75 0 0 1 0-1.06Z"/></svg>
<svg style="left:360.10px;top:559.20px;" width="14.4" height="14.4" viewBox="0 0 16 16" fill="#9198a1"><path d="M8 16A8 8 0 1 1 8 0a8 8 0 0 1 0 16Zm3.78-9.72a.751.751 0 0 0-.018-1.042.751.751 0 0 0-1.042-.018L6.75 9.19 5.28 7.72a.751.751 0 0 0-1.042.018.751.751 0 0 0-.018 1.042l2 2a.75.75 0 0 0 1.06 0Z"/></svg>
<svg style="left:334.70px;top:596.20px;" width="14.4" height="14.4" viewBox="0 0 16 16" fill="#9198a1"><path d="M6.22 3.22a.75.75 0 0 1 1.06 0l4.25 4.25a.75.75 0 0 1 0 1.06l-4.25 4.25a.751.751 0 0 1-1.042-.018.751.751 0 0 1-.018-1.042L9.94 8 6.22 4.28a.75.75 0 0 1 0-1.06Z"/></svg>
<svg style="left:360.10px;top:596.00px;" width="14.4" height="14.4" viewBox="0 0 16 16" fill="#9198a1"><path d="M8 16A8 8 0 1 1 8 0a8 8 0 0 1 0 16Zm3.78-9.72a.751.751 0 0 0-.018-1.042.751.751 0 0 0-1.042-.018L6.75 9.19 5.28 7.72a.751.751 0 0 0-1.042.018.751.751 0 0 0-.018 1.042l2 2a.75.75 0 0 0 1.06 0Z"/></svg>
<main>
<span class="t" style="left:95.30px;top:23.00px;line-height:18px;font-size:12.6px;color:#1f2328;letter-spacing:0.446px;">ngurah-bagus-trisna</span>
<span class="t" style="left:227.10px;top:21.00px;line-height:22px;font-size:16.5px;color:#59636e;">/</span>
<span class="t" style="left:242.80px;top:23.00px;line-height:18px;font-size:12.6px;color:#1f2328;font-weight:700;letter-spacing:0.461px;">ci-cd-demo</span>
<span class="t" style="left:442.90px;top:23.00px;line-height:18px;font-size:12.6px;color:#59636e;letter-spacing:0.047px;">Type</span>
<span class="t" style="left:480.10px;top:24.00px;line-height:16px;font-size:11.5px;color:#59636e;transform:skewX(-14deg);">/</span>
<span class="t" style="left:492.90px;top:23.00px;line-height:18px;font-size:12.6px;color:#59636e;letter-spacing:0.221px;">to search</span>
<span class="t" style="left:42.50px;top:67.00px;line-height:18px;font-size:12.6px;color:#1f2328;letter-spacing:0.173px;">Code</span>
<span class="t" style="left:119.50px;top:67.00px;line-height:18px;font-size:12.6px;color:#1f2328;letter-spacing:0.032px;">Issues</span>
<span class="t" style="left:203.50px;top:67.00px;line-height:18px;font-size:12.6px;color:#1f2328;letter-spacing:0.214px;">Pull requests</span>
<span class="t" style="left:326.10px;top:67.00px;line-height:18px;font-size:12.6px;color:#1f2328;font-weight:700;letter-spacing:-0.098px;">Actions</span>
<span class="t" style="left:417.50px;top:67.00px;line-height:18px;font-size:12.6px;color:#1f2328;letter-spacing:0.237px;">Projects</span>
<span class="t" style="left:511.50px;top:67.00px;line-height:18px;font-size:12.6px;color:#1f2328;letter-spacing:0.105px;">Wiki</span>
<span class="t" style="left:582.40px;top:67.00px;line-height:18px;font-size:12.6px;color:#1f2328;letter-spacing:0.288px;">Security</span>
<span class="t" style="left:677.70px;top:67.00px;line-height:18px;font-size:12.6px;color:#1f2328;letter-spacing:0.237px;">Insights</span>
<span class="t" style="left:770.40px;top:67.00px;line-height:18px;font-size:12.6px;color:#1f2328;letter-spacing:0.286px;">Settings</span>
<span class="t" style="left:45.80px;top:115.00px;line-height:18px;font-size:12.6px;color:#59636e;letter-spacing:0.063px;">Hello CI</span>
<h1 class="t" style="left:54.80px;top:140.00px;line-height:24px;font-size:18px;color:#1f2328;font-weight:700;letter-spacing:-0.304px;">ci: using matrix_strategy to ruuning workflow in diferent os</h1>
<span class="t" style="left:548.73px;top:140.00px;line-height:24px;font-size:18px;color:#59636e;">#1</span>
<span class="t" style="left:790.00px;top:142.00px;line-height:18px;font-size:12.6px;color:#25292e;letter-spacing:0.346px;">Re-run all jobs</span>
<span class="t" style="left:49.70px;top:200.00px;line-height:18px;font-size:12.6px;color:#1f2328;letter-spacing:0.087px;">Summary</span>
<span class="t" style="left:27.80px;top:245.00px;line-height:16px;font-size:10.8px;color:#59636e;font-weight:700;letter-spacing:0.024px;">Jobs</span>
<span class="t" style="left:49.70px;top:273.00px;line-height:18px;font-size:12.6px;color:#1f2328;letter-spacing:0.433px;">build (ubuntu-latest)</span>
<span class="t" style="left:49.70px;top:304.00px;line-height:18px;font-size:12.6px;color:#1f2328;font-weight:700;letter-spacing:0.239px;">build (windows-latest)</span>
<span class="t" style="left:49.70px;top:334.00px;line-height:18px;font-size:12.6px;color:#1f2328;letter-spacing:0.395px;">build (macos-latest)</span>
<span class="t" style="left:27.80px;top:379.00px;line-height:16px;font-size:10.8px;color:#59636e;font-weight:700;letter-spacing:0.072px;">Run details</span>
<span class="t" style="left:49.70px;top:408.00px;line-height:18px;font-size:12.6px;color:#1f2328;letter-spacing:0.019px;">Usage</span>
<span class="t" style="left:49.70px;top:437.00px;line-height:18px;font-size:12.6px;color:#1f2328;letter-spacing:0.334px;">Workflow file</span>
<h2 class="t" style="left:335.20px;top:214.00px;line-height:20px;font-size:14.4px;color:#ffffff;font-weight:700;letter-spacing:0.159px;">build (windows-latest)</h2>
<span class="t" style="left:335.20px;top:235.00px;line-height:16px;font-size:10.8px;color:#9198a1;letter-spacing:0.308px;">succeeded now in 15s</span>
<span class="t" style="left:702.80px;top:223.00px;line-height:18px;font-size:12.6px;color:#9198a1;letter-spacing:0.199px;">Search logs</span>
<span class="t" style="left:386.30px;top:284.00px;line-height:18px;font-size:12.6px;color:#9198a1;letter-spacing:0.218px;">Set up job</span>
<span class="t" style="left:386.30px;top:320.00px;line-height:18px;font-size:12.6px;color:#9198a1;letter-spacing:0.376px;">Checkout code</span>
<span class="t" style="left:386.30px;top:357.00px;line-height:18px;font-size:12.6px;color:#9198a1;letter-spacing:0.109px;">say hello</span>
<span class="t" style="left:386.30px;top:393.00px;line-height:18px;font-size:12.6px;color:#9198a1;letter-spacing:0.278px;">Greeting from variable</span>
<span class="t" style="left:386.30px;top:430.00px;line-height:18px;font-size:12.6px;color:#9198a1;letter-spacing:0.200px;">Echo secret</span>
<span class="t" style="left:386.30px;top:466.00px;line-height:18px;font-size:12.6px;color:#f0f6fc;letter-spacing:0.070px;">Display OS</span>
<span class="t" style="left:386.30px;top:558.00px;line-height:18px;font-size:12.6px;color:#9198a1;letter-spacing:0.277px;">Post Checkout code</span>
<span class="t" style="left:386.30px;top:594.00px;line-height:18px;font-size:12.6px;color:#9198a1;letter-spacing:0.315px;">Complete job</span>
<span class="t" style="left:364.82px;top:503.00px;line-height:17px;font-size:10.9px;color:#9198a1;font-family:'DejaVu Sans Mono', 'Liberation Mono', monospace;">1</span>
<span class="t" style="left:386.43px;top:504.00px;line-height:15px;font-size:9.5px;color:#f0f6fc;font-family:'DejaVu Sans Mono', 'Liberation Mono', monospace;transform:scaleY(1.4);transform-origin:50% 11px;">▶</span>
<span class="t" style="left:398.30px;top:503.00px;line-height:17px;font-size:10.9px;color:#f0f6fc;font-family:'DejaVu Sans Mono', 'Liberation Mono', monospace;letter-spacing:0.018px;">Run echo "Running on windows-latest"</span>
<span class="t" style="left:364.82px;top:521.00px;line-height:17px;font-size:10.9px;color:#9198a1;font-family:'DejaVu Sans Mono', 'Liberation Mono', monospace;">4</span>
<span class="t" style="left:386.30px;top:521.00px;line-height:17px;font-size:10.9px;color:#f0f6fc;font-family:'DejaVu Sans Mono', 'Liberation Mono', monospace;letter-spacing:-0.009px;">Running on windows-latest</span>
</main>
</body>
</html>
